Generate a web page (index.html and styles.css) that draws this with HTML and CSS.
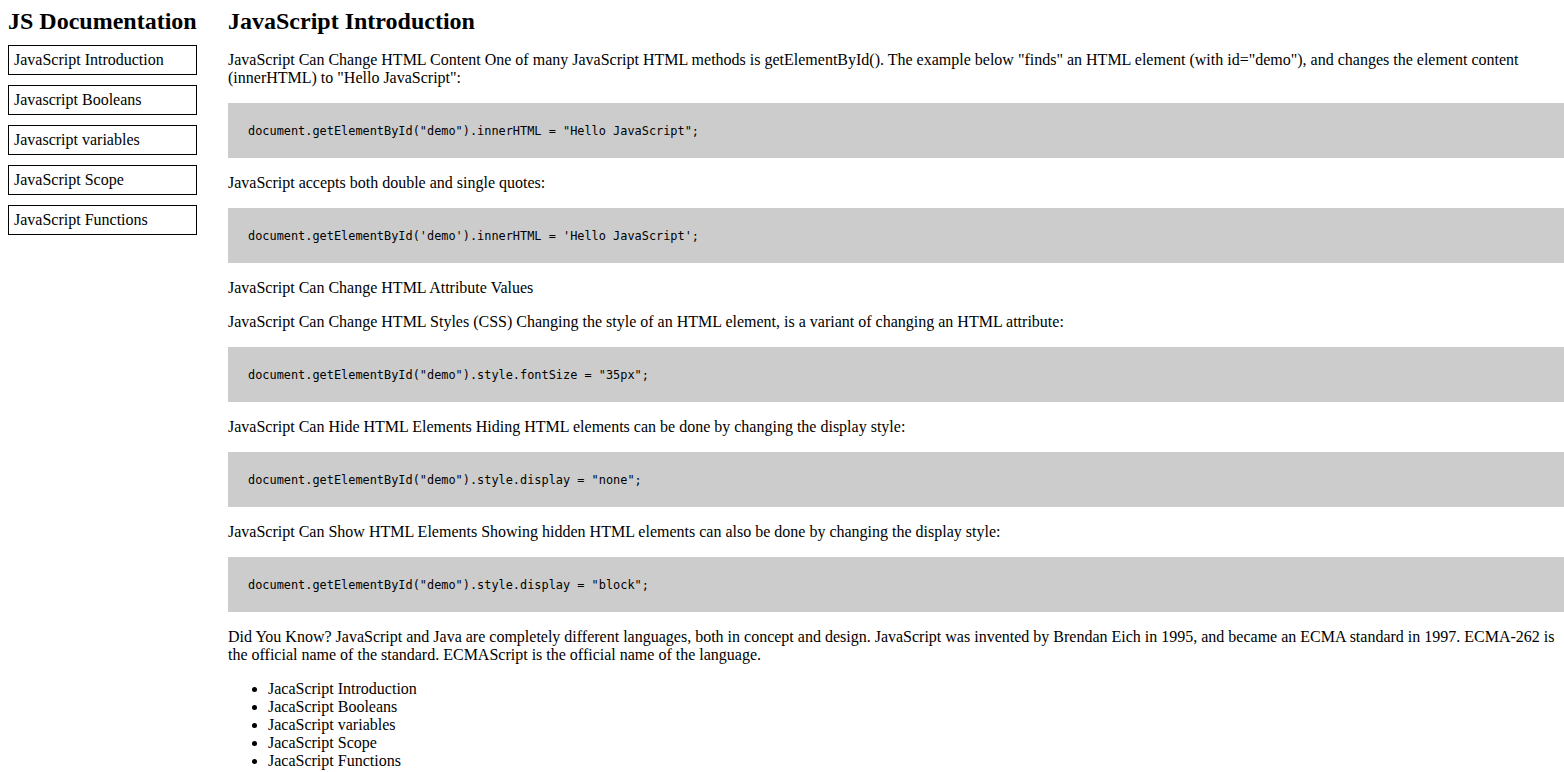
FILE: index.html
```html
<!DOCTYPE html>
<html>
<head>
<meta charset="utf-8">
<title>JS Documentation</title>
<link rel="stylesheet" href="styles.css">
</head>
<body>
<div class="page">
  <nav class="navbar">
    <header class="nav-title">JS Documentation</header>
    <a class="nav-link" href="#intro">JavaScript Introduction</a>
    <a class="nav-link" href="#booleans">Javascript Booleans</a>
    <a class="nav-link" href="#variables">Javascript variables</a>
    <a class="nav-link" href="#scope">JavaScript Scope</a>
    <a class="nav-link" href="#functions">JavaScript Functions</a>
  </nav>
  <main class="main">
    <section class="main-section" id="intro">
      <header class="section-title">JavaScript Introduction</header>
      <p class="text">JavaScript Can Change HTML Content One of many JavaScript HTML methods is getElementById(). The example below "finds" an HTML element (with id="demo"), and changes the element content (innerHTML) to "Hello JavaScript":</p>
      <pre class="code">document.getElementById("demo").innerHTML = "Hello JavaScript";</pre>
      <p class="text">JavaScript accepts both double and single quotes:</p>
      <pre class="code">document.getElementById('demo').innerHTML = 'Hello JavaScript';</pre>
      <p class="text">JavaScript Can Change HTML Attribute Values</p>
      <p class="text">JavaScript Can Change HTML Styles (CSS) Changing the style of an HTML element, is a variant of changing an HTML attribute:</p>
      <pre class="code">document.getElementById("demo").style.fontSize = "35px";</pre>
      <p class="text">JavaScript Can Hide HTML Elements Hiding HTML elements can be done by changing the display style:</p>
      <pre class="code">document.getElementById("demo").style.display = "none";</pre>
      <p class="text">JavaScript Can Show HTML Elements Showing hidden HTML elements can also be done by changing the display style:</p>
      <pre class="code">document.getElementById("demo").style.display = "block";</pre>
      <p class="text">Did You Know? JavaScript and Java are completely different languages, both in concept and design. JavaScript was invented by Brendan Eich in 1995, and became an ECMA standard in 1997. ECMA-262 is the official name of the standard. ECMAScript is the official name of the language.</p>
      <ul class="list">
        <li>JacaScript Introduction</li>
        <li>JacaScript Booleans</li>
        <li>JacaScript variables</li>
        <li>JacaScript Scope</li>
        <li>JacaScript Functions</li>
      </ul>
    </section>
  </main>
</div>
</body>
</html>
```
FILE: styles.css
```css
html, body {
  margin: 0;
  padding: 0;
  background: #ffffff;
  color: #000000;
  font-family: "Liberation Serif", "Times New Roman", serif;
  font-size: 16px;
  line-height: 18px;
}

.page {
  display: flex;
  align-items: flex-start;
  padding-left: 8px;
}

.navbar {
  width: 189px;
  flex: none;
  display: flex;
  flex-direction: column;
  gap: 10px;
}

.nav-title {
  font-size: 24px;
  font-weight: bold;
  line-height: 28px;
  padding-top: 7px;
  white-space: nowrap;
}

.nav-link {
  display: block;
  border: 1px solid #000;
  padding: 5px 5px;
  color: #000;
  text-decoration: none;
  line-height: 18px;
}

.main {
  flex: 1;
  margin-left: 31px;
  min-width: 0;
}

.section-title {
  font-size: 24px;
  font-weight: bold;
  line-height: 28px;
  padding-top: 7px;
  margin-bottom: 16px;
}

.text {
  margin: 16px 0;
}

.code {
  margin: 16px 0;
  padding: 21px 20px 19px;
  background: #cccccc;
  font-family: "DejaVu Sans Mono", "Liberation Mono", monospace;
  font-size: 11.9px;
  line-height: 15px;
  white-space: pre;
}

.list {
  margin: 16px 0;
  padding-left: 40px;
}
```
